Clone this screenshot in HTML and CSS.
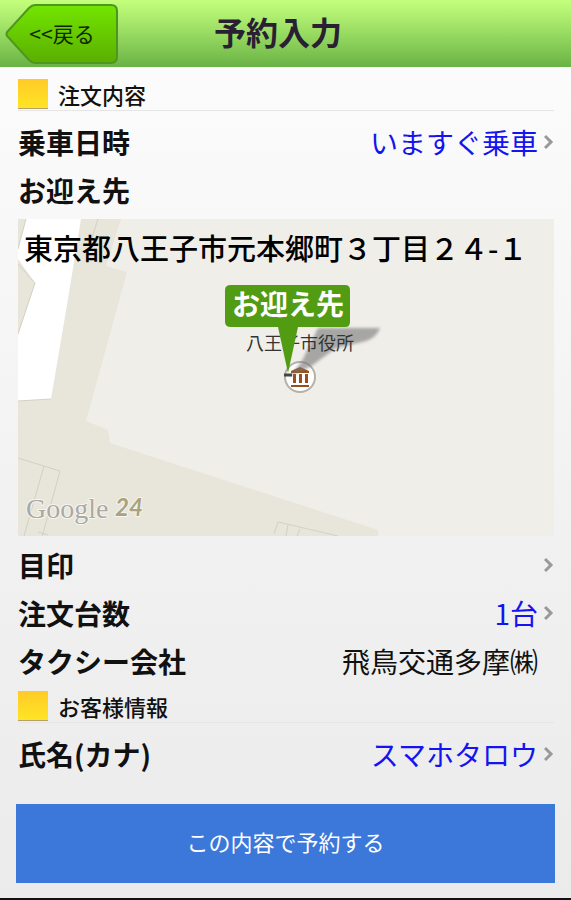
FILE: index.html
```
<!DOCTYPE html>
<html lang="ja">
<head>
    <meta charset="UTF-8">
    <meta name="viewport" content="width=device-width, initial-scale=1.0">
    <title>予約入力</title>
    <link rel="stylesheet" href="styles.css">
</head>
<body>
    <header class="header">
        <button type="button" class="back-btn">
            <svg class="back-shape" viewBox="0 0 114 62" aria-hidden="true">
                <defs>
                    <linearGradient id="backFill" x1="0" y1="0" x2="0" y2="1">
                        <stop offset="0" stop-color="#73e600"/>
                        <stop offset="1" stop-color="#5aae00"/>
                    </linearGradient>
                </defs>
                <path d="M30 2H106Q112 2 112 8V53Q112 60 106 60H30Q27 60 24 57L2 33Q1 31 2 29L24 5Q27 2 30 2Z" fill="url(#backFill)" stroke="#4f9620" stroke-width="2"/>
            </svg>
            <span class="back-text">&lt;&lt;戻る</span>
        </button>
        <h1 class="title">予約入力</h1>
    </header>

    <main class="content">
        <h2 class="section"><span class="section-icon"></span>注文内容</h2>
        <a href="#" class="row">
            <span class="label">乗車日時</span>
            <span class="value">いますぐ乗車</span>
            <svg class="arrow" viewBox="0 0 10 16"><path d="M1 2L7 8L1 14"/></svg>
        </a>
        <div class="row">
            <span class="label">お迎え先</span>
        </div>

        <div class="map">
            <svg class="map-image" viewBox="0 0 536 317">
                <defs>
                    <filter id="soft"><feGaussianBlur stdDeviation="1.5"/></filter>
                </defs>
                <!-- ground and road -->
                <rect width="536" height="317" fill="#efeee9"/>
                <path d="M0 0H103L88 47L109 53L68 202L90 211L92 224L360 311V317H0Z" fill="#e8e5da"/>
                <path d="M8 0H63L50 80L33 180L0 182V115L17 64L0 40V30Z" fill="#fff"/>
                <g fill="none" stroke="#d3d0c6">
                    <path d="M8 0L0 30M0 45L17 64L0 115M0 182L33 180M80 0L73 22"/>
                    <path d="M0 239L42 252L20 333M26 247L6 317M20 313L30 316"/>
                    <path d="M256 315L260 303L320 317M270 306L268 317M282 310L279 317"/>
                </g>

                <!-- city hall -->
                <circle cx="282" cy="158" r="15" fill="#fff" stroke="#b5b0a8" stroke-width="2"/>
                <path d="M273 154V152L282 148L291 152V154ZM275 155H278V164H275ZM281 155H284V164H281ZM287 155H290V164H287ZM273 166H291V168H273Z" fill="#95501c"/>
                <path d="M300 109H362Q358 121 340 124L318 129L292 148L271 158L284 142Z" fill="#777" opacity="0.6" filter="url(#soft)"/>
                <text x="228" y="131" class="place">八王子市役所</text>

                <!-- pickup marker -->
                <path d="M266 156H274" stroke="#444" stroke-width="3"/>
                <path d="M213 66H327Q332 66 332 71V103Q332 108 327 108H280L270 154L260 108H213Q207 108 207 103V71Q207 66 213 66Z" fill="#529c14"/>
                <text x="270" y="96" class="marker">お迎え先</text>

                <text x="8" y="299" class="brand">Google</text>
                <text x="97" y="297" class="brand-num">24</text>
            </svg>
            <p class="address">東京都八王子市元本郷町３丁目２４-１</p>
        </div>

        <a href="#" class="row">
            <span class="label">目印</span>
            <svg class="arrow" viewBox="0 0 10 16"><path d="M1 2L7 8L1 14"/></svg>
        </a>
        <a href="#" class="row">
            <span class="label">注文台数</span>
            <span class="value">1台</span>
            <svg class="arrow" viewBox="0 0 10 16"><path d="M1 2L7 8L1 14"/></svg>
        </a>
        <div class="row row-fixed">
            <span class="label">タクシー会社</span>
            <span class="value">飛鳥交通多摩㈱</span>
        </div>

        <h2 class="section"><span class="section-icon"></span>お客様情報</h2>
        <a href="#" class="row">
            <span class="label">氏名(カナ)</span>
            <span class="value">スマホタロウ</span>
            <svg class="arrow" viewBox="0 0 10 16"><path d="M1 2L7 8L1 14"/></svg>
        </a>
    </main>

    <div class="submit-area">
        <button type="button" class="submit-btn">この内容で予約する</button>
    </div>
</body>
</html>
```
FILE: styles.css
```
* {
    box-sizing: border-box;
}

body {
    display: flex;
    flex-direction: column;
    min-height: 100vh;
    margin: 0;
    border-bottom: 2px solid #111;
    background: linear-gradient(#fdfdfd, #f1f1f1 60%, #ebebeb);
    color: #111;
    font-family: "Noto Sans CJK JP", sans-serif;
}

button {
    padding: 0;
    border: none;
    background: none;
    font-family: inherit;
}

/* Header */
.header {
    display: grid;
    grid-template-columns: 1fr auto 1fr;
    align-items: center;
    height: 67px;
    padding: 0 20px 0 5px;
    background: linear-gradient(#c4ff7c, #98db62 50%, #69b244);
}

.back-btn {
    display: grid;
    justify-self: start;
    align-items: center;
    width: 114px;
    cursor: pointer;
}

.back-shape,
.back-text {
    grid-area: 1 / 1;
}

.back-shape {
    display: block;
    width: 100%;
}

.back-text {
    z-index: 1;
    padding-bottom: 2px;
    color: #102800;
    font-size: 21px;
    line-height: 32px;
}

.title {
    margin: 0;
    padding-bottom: 6px;
    color: #2b1f33;
    font-size: 32px;
    font-weight: 700;
    line-height: 48px;
}

/* Order rows */
.content {
    padding: 6px 17px 0 18px;
}

.section {
    display: flex;
    align-items: center;
    gap: 10px;
    height: 32px;
    margin: 6px 0 7px;
    padding-bottom: 1px;
    border-bottom: 1px solid #e6e6e6;
    font-size: 22px;
    font-weight: 500;
    line-height: 28px;
}

.section-icon {
    width: 30px;
    height: 30px;
    border-bottom: 1px solid #b5a06a;
    background: linear-gradient(#ffca28, #ffe524);
}

.row {
    display: flex;
    align-items: center;
    height: 48px;
    color: #111;
    font-size: 28px;
    line-height: 48px;
    text-decoration: none;
}

.row-fixed {
    padding-right: 16px;
}

.label {
    flex: 1;
    font-weight: 700;
}

.value {
    font-weight: 400;
}

a.row .value {
    color: #1414f0;
}

.arrow {
    width: 10px;
    height: 16px;
    margin-left: 6px;
    fill: none;
    stroke: #999;
    stroke-width: 3;
}

/* Map */
.map {
    position: relative;
    margin: 5px 0;
}

.map-image {
    display: block;
    width: 100%;
}

.address {
    position: absolute;
    top: 4px;
    left: 6px;
    margin: 0;
    color: #000;
    font-size: 29px;
    font-weight: 500;
    line-height: 48px;
    white-space: nowrap;
}

.place {
    fill: #333;
    font-size: 18px;
    font-weight: 400;
}

.marker {
    fill: #fff;
    font-size: 28px;
    font-weight: 700;
    text-anchor: middle;
}

.brand {
    fill: #aaa9a4;
    stroke: #f6f5f0;
    stroke-width: 2px;
    paint-order: stroke;
    font-family: "Liberation Serif", serif;
    font-size: 28px;
}

.brand-num {
    fill: #aaa37e;
    stroke: #f6f5f0;
    stroke-width: 2px;
    paint-order: stroke;
    font-family: Lato, sans-serif;
    font-size: 24px;
    font-style: italic;
    font-weight: 700;
}

/* Submit */
.submit-area {
    padding: 26px 16px 15px;
}

.submit-btn {
    width: 100%;
    height: 79px;
    padding-bottom: 6px;
    background-color: #3c78da;
    color: #fff;
    font-size: 22px;
    cursor: pointer;
}
```
